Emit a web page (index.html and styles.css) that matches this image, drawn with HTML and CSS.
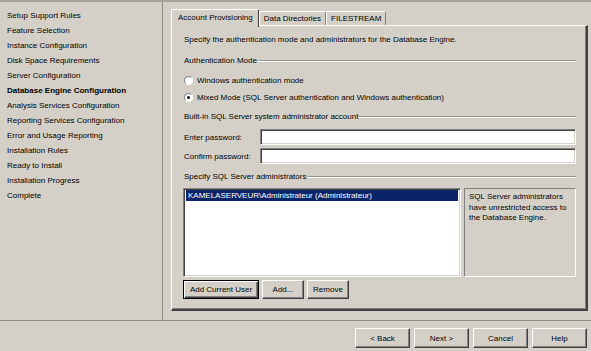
FILE: index.html
```html
<!DOCTYPE html>
<html lang="en">
<head>
    <meta charset="UTF-8">
    <meta name="viewport" content="width=device-width, initial-scale=1.0">
    <title>SQL Server Setup - Database Engine Configuration</title>
    <link rel="stylesheet" href="styles.css">
</head>
<body>
    <div class="window">
        <div class="main">
            <ul class="steps">
                <li>Setup Support Rules</li>
                <li>Feature Selection</li>
                <li>Instance Configuration</li>
                <li>Disk Space Requirements</li>
                <li>Server Configuration</li>
                <li class="current">Database Engine Configuration</li>
                <li>Analysis Services Configuration</li>
                <li>Reporting Services Configuration</li>
                <li>Error and Usage Reporting</li>
                <li>Installation Rules</li>
                <li>Ready to Install</li>
                <li>Installation Progress</li>
                <li>Complete</li>
            </ul>

            <div class="content">
                <div class="tabs">
                    <div class="tab active">Account Provisioning</div>
                    <div class="tab">Data Directories</div>
                    <div class="tab">FILESTREAM</div>
                </div>

                <div class="panel">
                    <p class="intro">Specify the authentication mode and administrators for the Database Engine.</p>

                    <div class="group-title auth-title">Authentication Mode</div>
                    <div class="radio-row first">
                        <span class="radio"></span>
                        <span>Windows authentication mode</span>
                    </div>
                    <div class="radio-row">
                        <span class="radio checked"></span>
                        <span>Mixed Mode (SQL Server authentication and Windows authentication)</span>
                    </div>

                    <div class="group-title sa-title">Built-in SQL Server system administrator account</div>
                    <div class="field first">
                        <span class="field-label">Enter password:</span>
                        <div class="textbox"></div>
                    </div>
                    <div class="field">
                        <span class="field-label">Confirm password:</span>
                        <div class="textbox"></div>
                    </div>

                    <div class="group-title admins-title">Specify SQL Server administrators</div>
                    <div class="admins">
                        <div class="listbox">
                            <div class="list-item selected">KAMELASERVEUR\Administrateur (Administrateur)</div>
                        </div>
                        <div class="note">SQL Server administrators have unrestricted access to the Database Engine.</div>
                    </div>

                    <div class="admin-buttons">
                        <button class="btn default wide">Add Current User</button>
                        <button class="btn small">Add...</button>
                        <button class="btn small">Remove</button>
                    </div>
                </div>
            </div>
        </div>

        <div class="footer">
            <button class="btn nav">&lt; Back</button>
            <button class="btn nav">Next &gt;</button>
            <button class="btn nav">Cancel</button>
            <button class="btn nav">Help</button>
        </div>
    </div>
</body>
</html>
```

FILE: styles.css
```css
* {
    box-sizing: border-box;
}

body {
    margin: 0;
    background-color: #d4d0c8;
    font-family: "Liberation Sans", Arial, sans-serif;
    font-size: 8px;
    color: #000;
}

.window {
    width: 591px;
    height: 351px;
    border-top: 2px solid #a7a49d;
    overflow: hidden;
}

.main {
    display: flex;
    height: 318px;
}

.steps {
    list-style: none;
    margin: 0;
    padding: 6px 0 0 7px;
    width: 163px;
    border-right: 1px solid #8e8b85;
}

.steps li {
    line-height: 15px;
    height: 15px;
    white-space: nowrap;
}

.steps .current {
    font-weight: bold;
}

.content {
    padding: 7px 0 0 8px;
}

/* tab strip */
.tabs {
    display: flex;
    align-items: flex-end;
    height: 16px;
    position: relative;
    z-index: 1;
}

.tab {
    height: 14px;
    line-height: 13px;
    padding: 0 4px;
    border: 1px solid #fff;
    border-bottom: none;
    border-right-color: #808080;
    border-radius: 2px 2px 0 0;
    white-space: nowrap;
}

.tab.active {
    height: 18px;
    line-height: 15px;
    padding: 0 5px 0 6px;
    margin-bottom: -2px;
    background-color: #d4d0c8;
    border-right: 1px solid #404040;
}

.panel {
    width: 417px;
    height: 286px;
    padding: 8px 10px 0 12px;
    border-top: 1px solid #fff;
    border-left: 1px solid #fff;
    border-right: 2px solid #404040;
    border-bottom: 2px solid #404040;
    box-shadow: inset -1px -1px #808080;
}

.intro {
    margin: 0;
    line-height: 12px;
    white-space: nowrap;
}

.group-title {
    display: flex;
    align-items: center;
    line-height: 12px;
    height: 12px;
    white-space: nowrap;
}

.group-title::after {
    content: "";
    flex: 1;
    height: 0;
    margin-left: 1px;
    border-top: 1px solid #9b9892;
    border-bottom: 1px solid #fff;
}

.auth-title {
    margin-top: 9px;
}

.sa-title {
    margin-top: 8px;
}

.admins-title {
    margin-top: 7px;
}

.radio-row {
    display: flex;
    align-items: center;
    height: 12px;
    margin-top: 5px;
    white-space: nowrap;
}

.radio-row.first {
    margin-top: 7px;
}

.radio {
    width: 9px;
    height: 9px;
    margin-right: 4px;
    border-radius: 50%;
    border: 1px solid;
    border-color: #808080 #fff #fff #808080;
    background-color: #fff;
    display: flex;
    align-items: center;
    justify-content: center;
}

.radio.checked::after {
    content: "";
    width: 3px;
    height: 3px;
    border-radius: 50%;
    background-color: #000;
}

.field {
    display: flex;
    align-items: center;
    height: 16px;
    margin-top: 3px;
}

.field.first {
    margin-top: 6px;
}

.field-label {
    width: 76px;
    white-space: nowrap;
}

.textbox {
    flex: 1;
    height: 16px;
    background-color: #fff;
    border: 1px solid;
    border-color: #808080 #fff #fff #808080;
    box-shadow: inset 1px 1px #404040, inset -1px -1px #d4d0c8;
}

.admins {
    display: flex;
    gap: 3px;
    height: 89px;
    margin-top: 5px;
    margin-left: -1px;
}

.listbox {
    flex: 1;
    background-color: #fff;
    border: 1px solid;
    border-color: #808080 #fff #fff #808080;
    box-shadow: inset 1px 1px #404040, inset -1px -1px #d4d0c8;
    padding: 1px 2px 2px 2px;
}

.list-item {
    height: 11px;
    line-height: 11px;
    padding-left: 2px;
    white-space: nowrap;
}

.list-item.selected {
    background-color: #0a246a;
    color: #fff;
}

.note {
    width: 112px;
    padding: 3px 3px 0 4px;
    line-height: 10.5px;
    border: 1px solid;
    border-color: #808080 #fff #fff #808080;
}

.admin-buttons {
    display: flex;
    gap: 3px;
    margin-top: 3px;
    margin-left: -1px;
}

/* classic raised buttons */
.btn {
    font-family: inherit;
    font-size: 8px;
    color: #000;
    background-color: #d4d0c8;
    height: 19px;
    padding: 0;
    border: 1px solid;
    border-color: #fff #404040 #404040 #fff;
    box-shadow: inset -1px -1px #808080;
    white-space: nowrap;
}

.btn.default {
    border: 1px solid #000;
    box-shadow: inset 1px 1px #fff, inset -1px -1px #404040, inset -2px -2px #808080;
}

.btn.wide {
    width: 76px;
}

.btn.small {
    width: 42px;
}

.footer {
    display: flex;
    justify-content: flex-end;
    gap: 4px;
    height: 31px;
    padding: 7px 4px 0 0;
    border-top: 1px solid #8e8b85;
}

.btn.nav {
    width: 55px;
    height: 20px;
}
```
